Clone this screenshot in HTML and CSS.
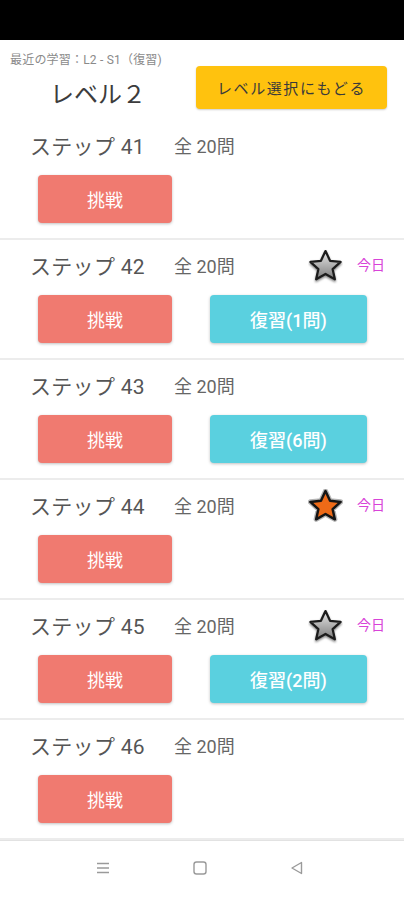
FILE: index.html
```html
<!DOCTYPE html>
<html lang="ja">
<head>
<meta charset="utf-8">
<title>レベル２</title>
<link rel="stylesheet" href="styles.css">
</head>
<body>
<svg width="0" height="0" class="defs">
  <defs>
    <linearGradient id="gstar" x1="0" y1="0" x2="0" y2="1">
      <stop offset="0" stop-color="#e6e6e6"/>
      <stop offset="1" stop-color="#7c7c7c"/>
    </linearGradient>
    <filter id="sh" x="-30%" y="-30%" width="160%" height="170%">
      <feDropShadow dx="0" dy="1.5" stdDeviation="1.2" flood-color="#000" flood-opacity="0.5"/>
    </filter>
  </defs>
</svg>
<div class="statusbar"></div>
<header class="header">
  <div class="header-left">
    <div class="recent">最近の学習：L2 - S1（復習)</div>
    <h1 class="level">レベル２</h1>
  </div>
  <div class="header-right">
    <button class="btn-back">レベル選択にもどる</button>
  </div>
</header>
<main class="list">
  <section class="card">
    <div class="card-head"><span class="step">ステップ 41</span><span class="total">全 20問</span></div>
    <div class="card-btns"><button class="btn btn-try">挑戦</button></div>
  </section>
  <section class="card">
    <div class="card-head"><span class="step">ステップ 42</span><span class="total">全 20問</span>
      <span class="badge"><svg class="star" viewBox="0 0 34 34" width="35" height="35"><path filter="url(#sh)" d="M17 2 L21.41 11.43 L31.72 12.56 L23.93 19.62 L26.1 29.44 L17 24.3 L7.9 29.44 L10.07 19.62 L2.28 12.56 L12.59 11.43 Z" fill="url(#gstar)" stroke="#1e1e1e" stroke-width="2.2" stroke-linejoin="round"/></svg><span class="today">今日</span></span></div>
    <div class="card-btns"><button class="btn btn-try">挑戦</button><button class="btn btn-review">復習(1問)</button></div>
  </section>
  <section class="card">
    <div class="card-head"><span class="step">ステップ 43</span><span class="total">全 20問</span></div>
    <div class="card-btns"><button class="btn btn-try">挑戦</button><button class="btn btn-review">復習(6問)</button></div>
  </section>
  <section class="card">
    <div class="card-head"><span class="step">ステップ 44</span><span class="total">全 20問</span>
      <span class="badge"><svg class="star" viewBox="0 0 34 34" width="35" height="35"><path d="M17 2 L21.41 11.43 L31.72 12.56 L23.93 19.62 L26.1 29.44 L17 24.3 L7.9 29.44 L10.07 19.62 L2.28 12.56 L12.59 11.43 Z" fill="none" stroke="#b5b5b5" stroke-width="5" stroke-linejoin="round"/><path d="M17 2 L21.41 11.43 L31.72 12.56 L23.93 19.62 L26.1 29.44 L17 24.3 L7.9 29.44 L10.07 19.62 L2.28 12.56 L12.59 11.43 Z" fill="#ee6a17" stroke="#151515" stroke-width="2.4" stroke-linejoin="round"/></svg><span class="today">今日</span></span></div>
    <div class="card-btns"><button class="btn btn-try">挑戦</button></div>
  </section>
  <section class="card">
    <div class="card-head"><span class="step">ステップ 45</span><span class="total">全 20問</span>
      <span class="badge"><svg class="star" viewBox="0 0 34 34" width="35" height="35"><path filter="url(#sh)" d="M17 2 L21.41 11.43 L31.72 12.56 L23.93 19.62 L26.1 29.44 L17 24.3 L7.9 29.44 L10.07 19.62 L2.28 12.56 L12.59 11.43 Z" fill="url(#gstar)" stroke="#1e1e1e" stroke-width="2.2" stroke-linejoin="round"/></svg><span class="today">今日</span></span></div>
    <div class="card-btns"><button class="btn btn-try">挑戦</button><button class="btn btn-review">復習(2問)</button></div>
  </section>
  <section class="card">
    <div class="card-head"><span class="step">ステップ 46</span><span class="total">全 20問</span></div>
    <div class="card-btns"><button class="btn btn-try">挑戦</button></div>
  </section>
</main>
<nav class="navbar">
  <svg class="nav-icon" width="16" height="14" viewBox="0 0 16 14"><path d="M2 2.5H14M2 7H14M2 11.5H14" stroke="#9a9a9a" stroke-width="1.4" fill="none"/></svg>
  <svg class="nav-icon" width="16" height="16" viewBox="0 0 16 16"><rect x="2" y="2" width="12" height="12" rx="2.5" stroke="#9a9a9a" stroke-width="1.4" fill="none"/></svg>
  <svg class="nav-icon" width="16" height="16" viewBox="0 0 16 16"><path d="M12.5 2.5V13.5L3 8Z" stroke="#9a9a9a" stroke-width="1.4" stroke-linejoin="round" fill="none"/></svg>
</nav>
</body>
</html>
```
FILE: styles.css
```css
* { box-sizing: border-box; }
html, body { margin: 0; padding: 0; }
body {
  width: 404px;
  height: 900px;
  overflow: hidden;
  background: #fff;
  font-family: Roboto, "Noto Sans CJK JP", "Noto Sans", sans-serif;
  color: #444;
}
.defs { position: absolute; width: 0; height: 0; }
.statusbar { height: 40px; background: #000; }

.header { display: flex; height: 80px; }
.header-left { width: 196px; padding-top: 10px; }
.recent {
  height: 20px;
  line-height: 20px;
  padding-left: 10px;
  font-size: 12px;
  color: #8a8a8a;
  white-space: nowrap;
  letter-spacing: 0.2px;
}
.level {
  margin: 10px 0 0;
  height: 30px;
  line-height: 30px;
  text-align: center;
  font-size: 24px;
  font-weight: 400;
  color: #3c3c3c;
}
.header-right { padding-top: 26px; }
.btn-back {
  width: 191px;
  height: 43px;
  border: none;
  border-radius: 4px;
  background: #ffc20e;
  color: #3a3a3a;
  font-family: inherit;
  font-size: 15px;
  letter-spacing: 1.6px;
  padding: 0;
  box-shadow: 0 1px 2px rgba(0,0,0,0.2);
}

.card {
  height: 120px;
  padding-bottom: 15px;
  border-bottom: 2px solid #ececec;
}
.card-head {
  height: 50px;
  display: flex;
  align-items: center;
  padding-left: 30px;
}
.step { font-size: 21px; color: #555; width: 144px; letter-spacing: 0.3px; }
.total { font-size: 18px; color: #666; }
.badge { display: flex; align-items: center; margin-left: auto; margin-right: 19px; gap: 14px; }
.star { display: block; margin-top: 2px; }
.today { font-size: 14px; color: #d844d8; margin-top: -2px; }

.card-btns {
  margin-top: 5px;
  display: flex;
  padding-left: 38px;
  gap: 38px;
}
.btn {
  height: 48px;
  border: none;
  border-radius: 4px;
  color: #fff;
  font-family: inherit;
  font-size: 18px;
  font-weight: 400;
  box-shadow: 0 1px 3px rgba(0,0,0,0.25);
}
.btn-try { width: 134px; background: #f07a70; }
.btn-review { width: 157px; background: #5ad0df; font-weight: 500; }

.navbar {
  height: 60px;
  border-top: 1px solid #e2e2e2;
  display: flex;
  align-items: center;
  justify-content: center;
  gap: 81px;
  padding-bottom: 6px;
  padding-right: 4px;
}
.nav-icon { display: block; }
```
